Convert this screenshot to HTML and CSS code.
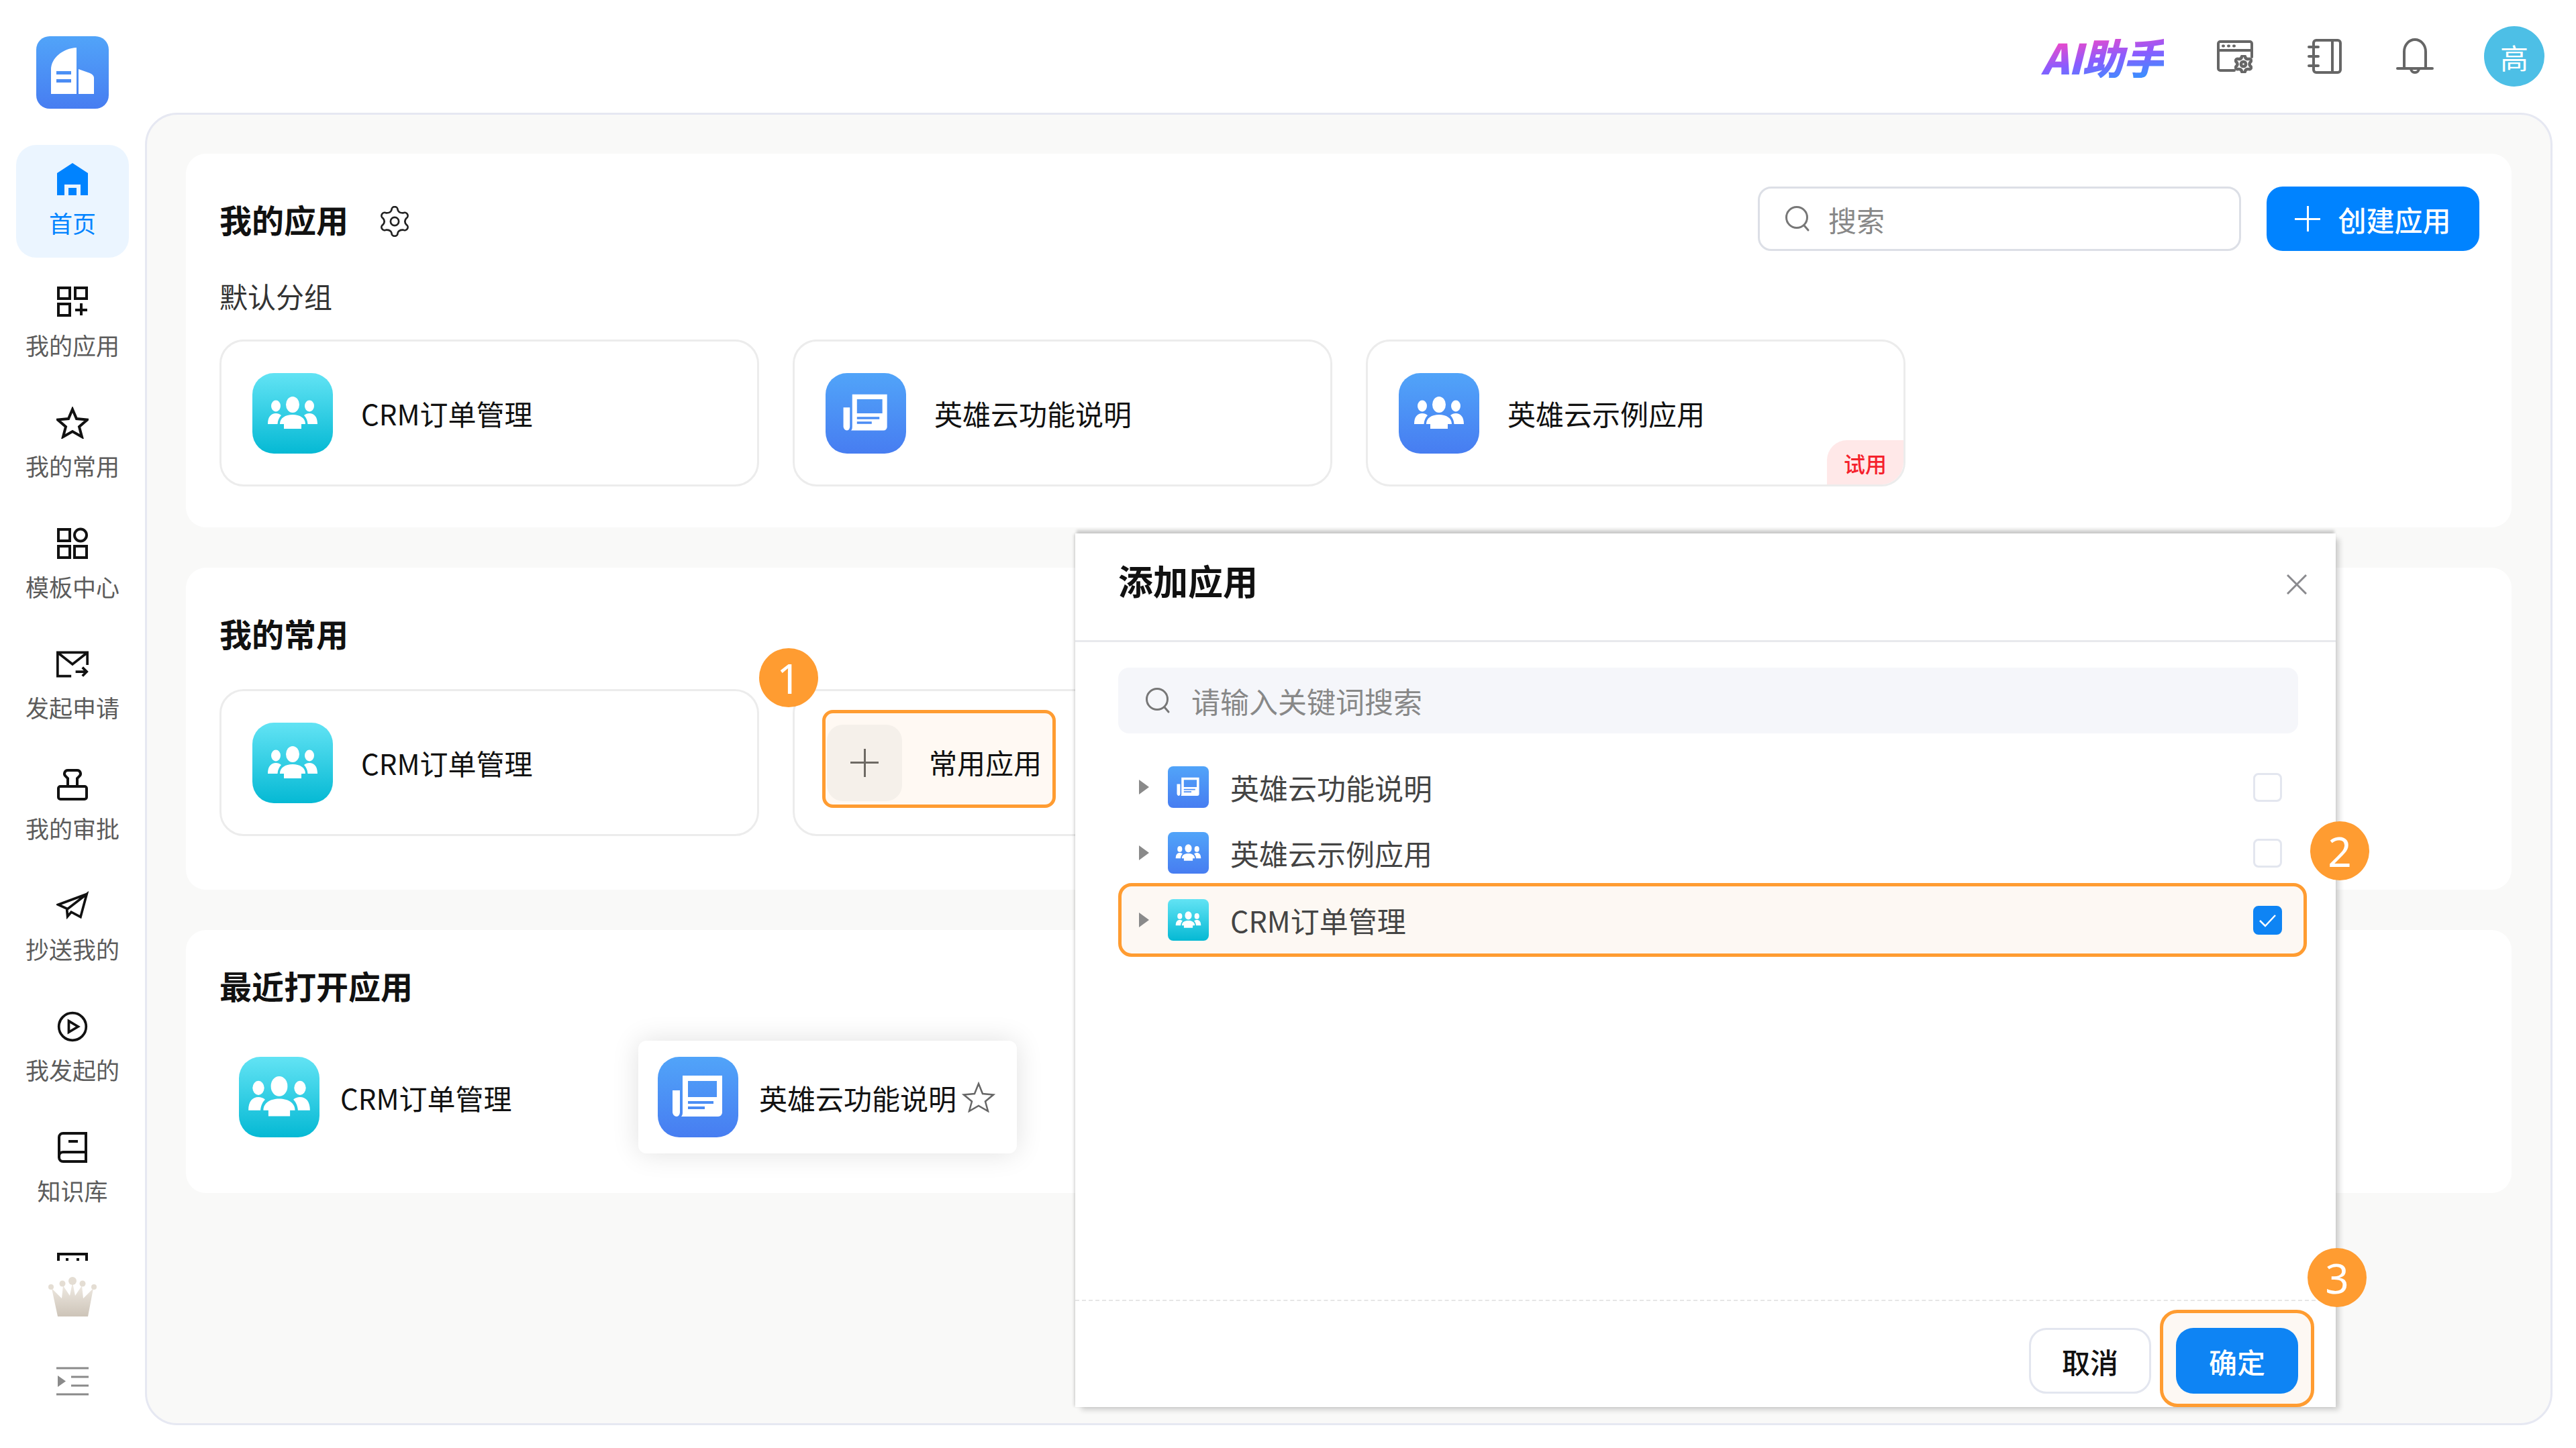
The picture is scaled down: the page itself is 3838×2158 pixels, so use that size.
FILE: index.html
```html
<!DOCTYPE html>
<html lang="zh-CN">

<head>
    <meta charset="UTF-8">
    <title>我的应用</title>
    <link rel="stylesheet" href="styles.css">
</head>

<body>
    <svg class="sprite" xmlns="http://www.w3.org/2000/svg">
        <symbol id="i-people" viewBox="0 0 120 120">
            <ellipse cx="35" cy="49" rx="7" ry="8.5" />
            <ellipse cx="85" cy="49" rx="7" ry="8.5" />
            <ellipse cx="60" cy="47" rx="10" ry="12" />
            <path d="M23 76c0-11 5-16 12-16 3 0 6 1 8 3-3 3-5 7-5.500 13z" />
            <path d="M97 76c0-11-5-16-12-16-3 0-6 1-8 3 3 3 5 7 5.500 13z" />
            <path d="M41 76c0-9 8-14 19-14s19 5 19 14h-6v7H47v-7z" />
        </symbol>
        <symbol id="i-paper" viewBox="0 0 120 120">
            <path fill-rule="evenodd" d="M37 28h59v55a6 6 0 0 1-6 6H35c2-2 2-4 2-8zM45 36v24h43V36zM45 66v4h38v-4zM45 74v4h25v-4z" />
            <path d="M22 50h11v32c0 4-2 7-5 7s-6-3-6-7z" />
        </symbol>
        <symbol id="i-gear" viewBox="0 0 24 24">
            <path d="M9.600 3A2.400 2.400 0 0 1 14.400 3Q15 5.500 18.600 5.420A2.400 2.400 0 0 1 21 9.580Q19 12 21 14.420A2.400 2.400 0 0 1 18.600 18.580Q15 18.500 14.400 21A2.400 2.400 0 0 1 9.600 21Q9 18.500 5.400 18.580A2.400 2.400 0 0 1 3 14.420Q5 12 3 9.580A2.400 2.400 0 0 1 5.400 5.420Q9 5.500 9.600 3Z" />
            <circle cx="12" cy="12" r="3.200" />
        </symbol>
        <symbol id="i-search" viewBox="0 0 40 40">
            <circle cx="19" cy="18" r="15.500" />
            <path d="M30 30l6 7" />
        </symbol>
    </svg>

    <aside class="sidebar">
        <div class="logo">
            <svg viewBox="0 0 108 108" width="108" height="108">
                <path fill="#fff" fill-rule="evenodd" d="M22 86V50C22 32 40 18 60 17v69zM30 52v5h22v-5zM30 64v5h22v-5z" />
                <path fill="#fff" d="M63 49l17 6q6 3 6 7v24H63z" />
            </svg>
        </div>
        <nav class="nav">
            <a class="nav-item active">
                <svg class="nav-icon" viewBox="0 0 48 48">
                    <path class="solid" d="M24 0l23 15v33H1V15z" />
                    <path fill="#ebf5ff" d="M12 32h24v16H12z" />
                    <path class="solid" d="M18 37h12v11H18z" />
                </svg>
                <span>首页</span>
            </a>
            <a class="nav-item">
                <svg class="nav-icon" viewBox="0 0 48 48">
                    <rect x="3" y="3" width="17" height="16" />
                    <rect x="28" y="3" width="17" height="16" />
                    <rect x="3" y="27" width="17" height="17" />
                    <path d="M37 26v18M28 36h18" />
                </svg>
                <span>我的应用</span>
            </a>
            <a class="nav-item">
                <svg class="nav-icon" viewBox="0 0 48 48">
                    <path d="M24 4l6 14 16 1.500-12 10.500 4 15-14-8-14 8 4-15-12-10.500 16-1.500z" />
                </svg>
                <span>我的常用</span>
            </a>
            <a class="nav-item">
                <svg class="nav-icon" viewBox="0 0 48 48">
                    <rect x="3" y="3" width="17" height="17" />
                    <circle cx="36" cy="11.500" r="9" />
                    <rect x="3" y="28" width="17" height="17" />
                    <rect x="27" y="28" width="18" height="17" />
                </svg>
                <span>模板中心</span>
            </a>
            <a class="nav-item">
                <svg class="nav-icon" viewBox="0 0 52 48">
                    <path d="M24 43H2V5h48v20M2 5l24 19L50 5M31 36h18M42 29l7 7-7 7" />
                </svg>
                <span>发起申请</span>
            </a>
            <a class="nav-item">
                <svg class="nav-icon" viewBox="0 0 48 48">
                    <path d="M17 2h14a5 5 0 0 1 3 9l-3 3v12H17V14l-3-3a5 5 0 0 1 3-9z" />
                    <rect x="3" y="26" width="42" height="19" rx="3" />
                </svg>
                <span>我的审批</span>
            </a>
            <a class="nav-item">
                <svg class="nav-icon" viewBox="0 0 52 48">
                    <path d="M49 5L3 22l15 7L49 5 39 42l-15-8-6 7-1-11" />
                </svg>
                <span>抄送我的</span>
            </a>
            <a class="nav-item">
                <svg class="nav-icon" viewBox="0 0 52 48">
                    <circle cx="26" cy="24" r="22" />
                    <path d="M20 15l15 9-15 9z" />
                </svg>
                <span>我发起的</span>
            </a>
            <a class="nav-item">
                <svg class="nav-icon" viewBox="0 0 48 48">
                    <path d="M10 3h34v42H10a6 6 0 0 1-6-6V9a6 6 0 0 1 6-6zM4 37a6 6 0 0 1 6-6h34M18 15h14" />
                </svg>
                <span>知识库</span>
            </a>
            <a class="nav-item">
                <svg class="nav-icon" viewBox="0 0 48 48">
                    <rect x="3" y="3" width="42" height="42" />
                    <path d="M16 9v6M32 9v6" />
                </svg>
            </a>
        </nav>
        <svg class="crown" viewBox="0 0 72 61">
            <defs>
                <linearGradient id="crown-fill" x1="0" y1="0" x2="0" y2="1">
                    <stop offset="0" stop-color="#f1ece5" />
                    <stop offset="1" stop-color="#cdc4b8" />
                </linearGradient>
            </defs>
            <path fill="url(#crown-fill)" d="M5 17l15 15L22 13l10 15 4-20 4 20 10-15 2 19 15-15-8 42H14z" />
            <circle cx="4" cy="15" r="4" fill="#e4ddd3" />
            <circle cx="21" cy="10" r="4.500" fill="#e4ddd3" />
            <circle cx="36" cy="6" r="6" fill="#e4ddd3" />
            <circle cx="51" cy="10" r="4.500" fill="#e4ddd3" />
            <circle cx="68" cy="15" r="4" fill="#e4ddd3" />
        </svg>
        <svg class="collapse" viewBox="0 0 48 43">
            <path d="M0 2h48M22 15h26M22 28h26M0 41h48" stroke="#8a8a8a" stroke-width="3" fill="none" />
            <path d="M2 13l12 8.500L2 30z" fill="#8a8a8a" />
        </svg>
    </aside>

    <div class="content">
        <header class="topbar">
            <span class="ai-label">AI助手</span>
            <svg class="top-icon" viewBox="0 0 56 50">
                <path d="M27 46H6a3 3 0 0 1-3-3V6a3 3 0 0 1 3-3h44a3 3 0 0 1 3 3v20M3 16h50" />
                <path class="dots" d="M10 9.500h1M18 9.500h1M26 9.500h1" />
                <use href="#i-gear" x="27" y="23" width="27" height="27" />
            </svg>
            <svg class="top-icon" viewBox="0 0 56 54">
                <rect x="11" y="3" width="40" height="48" rx="4" />
                <path d="M39 3v48M4 13h14M4 27h14M4 41h14" />
            </svg>
            <svg class="top-icon" viewBox="0 0 56 56">
                <path d="M12 46V21a16 18 0 0 1 32 0v25M2 46h52M22 46a6 6 0 0 0 12 0" />
            </svg>
            <div class="avatar">高</div>
        </header>

        <main class="main">
            <section class="panel panel-apps">
                <div class="panel-head">
                    <h2>我的应用</h2>
                    <svg class="title-gear"><use href="#i-gear" /></svg>
                    <div class="search-box">
                        <svg class="search-icon"><use href="#i-search" /></svg>
                        <span>搜索</span>
                    </div>
                    <button class="create-btn"><span class="plus"></span>创建应用</button>
                </div>
                <div class="group-name">默认分组</div>
                <div class="app-row">
                    <div class="app-card">
                        <div class="app-icon cyan"><svg><use href="#i-people" /></svg></div>
                        <span>CRM订单管理</span>
                    </div>
                    <div class="app-card">
                        <div class="app-icon blue"><svg class="small"><use href="#i-paper" /></svg></div>
                        <span>英雄云功能说明</span>
                    </div>
                    <div class="app-card">
                        <div class="app-icon blue"><svg><use href="#i-people" /></svg></div>
                        <span>英雄云示例应用</span>
                        <span class="trial-tag">试用</span>
                    </div>
                </div>
            </section>

            <section class="panel panel-common">
                <h2>我的常用</h2>
                <div class="app-row">
                    <div class="app-card">
                        <div class="app-icon cyan"><svg><use href="#i-people" /></svg></div>
                        <span>CRM订单管理</span>
                    </div>
                    <div class="app-card add-card">
                        <div class="add-app">
                            <div class="add-tile"><span class="plus"></span></div>
                            <span>常用应用</span>
                        </div>
                    </div>
                </div>
            </section>

            <section class="panel panel-recent">
                <h2>最近打开应用</h2>
                <div class="recent-row">
                    <div class="recent-item">
                        <div class="app-icon cyan"><svg class="large"><use href="#i-people" /></svg></div>
                        <span>CRM订单管理</span>
                    </div>
                    <div class="recent-item hovered">
                        <div class="app-icon blue"><svg><use href="#i-paper" /></svg></div>
                        <span>英雄云功能说明</span>
                        <svg class="fav-star" viewBox="0 0 50 46">
                            <path d="M25 3l6 15 16 1.500-12 10 4 14.500-14-8-14 8 4-14.500-12-10L19 18z" />
                        </svg>
                    </div>
                </div>
            </section>

            <div class="dialog">
                <div class="dialog-head">
                    <h3>添加应用</h3>
                    <svg class="close-icon" viewBox="0 0 30 30">
                        <path d="M1 1l28 28M29 1L1 29" />
                    </svg>
                </div>
                <div class="dialog-search">
                    <svg class="search-icon"><use href="#i-search" /></svg>
                    <span>请输入关键词搜索</span>
                </div>
                <div class="tree">
                    <div class="tree-row">
                        <span class="caret"></span>
                        <div class="tree-icon blue"><svg class="small"><use href="#i-paper" /></svg></div>
                        <span class="tree-name">英雄云功能说明</span>
                        <span class="check"></span>
                    </div>
                    <div class="tree-row">
                        <span class="caret"></span>
                        <div class="tree-icon blue"><svg><use href="#i-people" /></svg></div>
                        <span class="tree-name">英雄云示例应用</span>
                        <span class="check"></span>
                    </div>
                    <div class="tree-row selected">
                        <span class="caret"></span>
                        <div class="tree-icon cyan"><svg><use href="#i-people" /></svg></div>
                        <span class="tree-name">CRM订单管理</span>
                        <span class="check checked">
                            <svg viewBox="0 0 43 43"><path d="M10 22l8 8 15-16" /></svg>
                        </span>
                    </div>
                </div>
                <div class="dialog-foot">
                    <button class="cancel-btn">取消</button>
                    <div class="confirm-wrap">
                        <button class="confirm-btn">确定</button>
                    </div>
                </div>
            </div>

            <span class="step step-1">1</span>
            <span class="step step-2">2</span>
            <span class="step step-3">3</span>
        </main>
    </div>
</body>

</html>
```

FILE: styles.css
```css
* {
    box-sizing: border-box;
}

html,
body {
    margin: 0;
    height: 100%;
}

body {
    display: flex;
    height: 2158px;
    overflow: hidden;
    background-color: #fff;
    font-family: "Noto Sans CJK SC", "Noto Sans", sans-serif;
    color: #111;
}

h2,
h3 {
    margin: 0;
    font-weight: 700;
}

button {
    font-family: inherit;
    border: none;
    padding: 0;
}

.sprite {
    position: absolute;
    width: 0;
    height: 0;
}

/* sidebar */
.sidebar {
    width: 216px;
    flex-shrink: 0;
    display: flex;
    flex-direction: column;
    align-items: center;
    padding-top: 54px;
}

.logo {
    width: 108px;
    height: 108px;
    flex-shrink: 0;
    border-radius: 20px;
    background: linear-gradient(180deg, #51a4f9, #477df1);
    margin-bottom: 54px;
}

.logo svg {
    display: block;
}

.nav {
    width: 168px;
    height: 1663px;
    flex-shrink: 0;
    display: flex;
    flex-direction: column;
    gap: 12px;
    overflow: hidden;
}

.nav-item {
    height: 168px;
    flex-shrink: 0;
    display: flex;
    flex-direction: column;
    align-items: center;
    padding-top: 30px;
    border-radius: 30px;
    font-size: 35px;
    line-height: 44px;
    color: #5c5c5c;
    white-space: nowrap;
}

.nav-item span {
    margin-top: 18px;
}

.nav-item.active {
    padding-top: 27px;
    background-color: #ebf5ff;
    color: #0083ff;
}

.nav-item.active span {
    margin-top: 19px;
}

.nav-icon {
    width: 48px;
    height: 48px;
    flex-shrink: 0;
    fill: none;
    stroke: #111;
    stroke-width: 4;
}

.nav-icon .solid {
    fill: #0083ff;
    stroke: none;
}

.active .nav-icon {
    stroke: none;
}

.crown {
    width: 72px;
    height: 61px;
    margin-top: 24px;
    flex-shrink: 0;
}

.collapse {
    width: 48px;
    height: 43px;
    margin-top: 73px;
    flex-shrink: 0;
}

/* top bar */
.content {
    width: 3587px;
    display: flex;
    flex-direction: column;
}

.topbar {
    height: 168px;
    flex-shrink: 0;
    display: flex;
    align-items: center;
    justify-content: flex-end;
    gap: 78px;
    margin-right: -35px;
    padding-right: 47px;
}

.ai-label {
    font-size: 62px;
    line-height: 64px;
    font-weight: 900;
    font-style: italic;
    letter-spacing: -1px;
    color: transparent;
    background: linear-gradient(170deg, #ff45c0 10%, #8a5cff 55%, #3f8cff 90%);
    -webkit-background-clip: text;
    background-clip: text;
}

.top-icon {
    width: 56px;
    height: 56px;
    fill: none;
    stroke: #666;
    stroke-width: 4;
    stroke-linecap: round;
    overflow: visible;
}

.top-icon .dots {
    stroke-width: 4;
}

.avatar {
    width: 90px;
    height: 90px;
    margin-left: -3px;
    border-radius: 50%;
    background-color: #4dbfe6;
    color: #fff;
    font-size: 42px;
    display: flex;
    align-items: center;
    justify-content: center;
}

/* main area */
.main {
    position: relative;
    height: 1956px;
    display: flex;
    flex-direction: column;
    gap: 60px;
    padding: 61px 58px 0;
    background-color: #f9f9f8;
    border: 3px solid #e6e8f2;
    border-radius: 48px;
}

.panel {
    background-color: #fff;
    border-radius: 30px;
    padding: 0 50px;
    overflow: hidden;
    flex-shrink: 0;
}

.panel h2 {
    font-size: 48px;
    line-height: 58px;
}

.panel-apps {
    margin-top: -3px;
    height: 557px;
    padding-top: 49px;
}

.panel-common {
    height: 480px;
    padding-top: 68px;
}

.panel-recent {
    height: 392px;
    padding-top: 53px;
}

.panel-head {
    display: flex;
    align-items: center;
    height: 96px;
}

.title-gear {
    width: 46px;
    height: 46px;
    margin-left: 46px;
    margin-top: 8px;
    fill: none;
    stroke: #222;
    stroke-width: 1.400;
}

.search-box {
    width: 720px;
    height: 96px;
    margin-left: auto;
    display: flex;
    align-items: center;
    gap: 26px;
    padding-left: 36px;
    border: 3px solid #dcdfe6;
    border-radius: 20px;
    font-size: 42px;
    color: #888;
}

.search-icon {
    width: 40px;
    height: 40px;
    fill: none;
    stroke: #777;
    stroke-width: 3;
    stroke-linecap: round;
}

.create-btn {
    width: 317px;
    height: 96px;
    margin-left: 38px;
    margin-right: -2px;
    display: flex;
    align-items: center;
    justify-content: center;
    gap: 26px;
    background-color: #0083ff;
    color: #fff;
    border-radius: 24px;
    font-size: 42px;
    font-weight: 500;
}

.plus {
    position: relative;
    width: 38px;
    height: 38px;
    flex-shrink: 0;
    background:
        linear-gradient(currentColor, currentColor) center / 100% 3px no-repeat,
        linear-gradient(currentColor, currentColor) center / 3px 100% no-repeat;
}

.group-name {
    margin-top: 37px;
    font-size: 42px;
    line-height: 60px;
    color: #333;
}

.app-row {
    display: flex;
    gap: 50px;
    margin-top: 55px;
}

.group-name + .app-row {
    margin-top: 35px;
}

.app-card {
    position: relative;
    width: 804px;
    height: 219px;
    flex-shrink: 0;
    display: flex;
    align-items: center;
    gap: 42px;
    padding-left: 46px;
    border: 3px solid #ececec;
    border-radius: 36px;
    font-size: 42px;
    overflow: hidden;
}

.app-icon {
    width: 120px;
    height: 120px;
    flex-shrink: 0;
    border-radius: 32px;
}

.app-icon svg,
.tree-icon svg {
    display: block;
    width: 100%;
    height: 100%;
    fill: #fff;
}

.app-icon svg.small,
.tree-icon svg.small {
    transform: scale(0.88);
}

.app-icon svg.large {
    transform: scale(1.24);
}

.cyan {
    background: linear-gradient(180deg, #62e3f4, #05b9d4);
}

.blue {
    background: linear-gradient(180deg, #51a4f9, #477df1);
}

.trial-tag {
    position: absolute;
    right: 0;
    bottom: 0;
    width: 114px;
    height: 66px;
    padding-top: 12px;
    text-align: center;
    background-color: #ffe8e8;
    border-top-left-radius: 30px;
    color: #f5222d;
    font-size: 32px;
    line-height: 44px;
    font-weight: 500;
}

.add-card {
    padding: 0 0 12px 41px;
}

.add-app {
    width: 348px;
    height: 146px;
    flex-shrink: 0;
    display: flex;
    align-items: center;
    gap: 40px;
    padding-left: 2px;
    background-color: #fff9f3;
    border: 5px solid #ff9c31;
    border-radius: 16px;
    white-space: nowrap;
}

.add-tile {
    width: 112px;
    height: 114px;
    margin-top: 12px;
    flex-shrink: 0;
    display: flex;
    align-items: center;
    justify-content: center;
    background-color: #f5f0ea;
    border-radius: 24px;
    color: #6e6a64;
}

.add-tile .plus {
    width: 42px;
    height: 42px;
}

.add-app > span {
    margin-top: 10px;
}

.recent-row {
    display: flex;
    gap: 60px;
    margin-top: 54px;
}

.recent-item {
    width: 564px;
    height: 168px;
    flex-shrink: 0;
    display: flex;
    align-items: center;
    gap: 31px;
    padding-left: 29px;
    font-size: 42px;
    border-radius: 12px;
    white-space: nowrap;
}

.recent-item.hovered {
    box-shadow: 0 0 40px rgba(0, 0, 0, 0.12);
}

.fav-star {
    width: 50px;
    height: 46px;
    margin-left: -23px;
    flex-shrink: 0;
    fill: none;
    stroke: #666;
    stroke-width: 2.500;
}

/* dialog */
.dialog {
    position: absolute;
    left: 1383px;
    top: 624px;
    width: 1878px;
    height: 1302px;
    display: flex;
    flex-direction: column;
    background-color: #fff;
    box-shadow:
        0 -7px 4px -2px rgba(0, 0, 0, 0.17),
        7px 6px 8px -2px rgba(0, 0, 0, 0.18),
        -3px 0 4px -1px rgba(0, 0, 0, 0.14);
}

.dialog-head {
    height: 162px;
    flex-shrink: 0;
    display: flex;
    align-items: center;
    justify-content: space-between;
    padding: 0 43px 0 64px;
    border-bottom: 3px solid #e8e9ed;
}

.dialog-head h3 {
    font-size: 52px;
    line-height: 60px;
    margin-bottom: 20px;
}

.close-icon {
    width: 30px;
    height: 30px;
    margin-bottom: 8px;
    fill: none;
    stroke: #8a8a8e;
    stroke-width: 3;
}

.dialog-search {
    height: 98px;
    flex-shrink: 0;
    margin: 38px 56px 0 64px;
    display: flex;
    align-items: center;
    gap: 30px;
    padding-left: 39px;
    background-color: #f5f6fa;
    border-radius: 16px;
    font-size: 43px;
    color: #888;
}

.tree {
    margin: 31px 43px 0 64px;
}

.tree-row {
    height: 98px;
    display: flex;
    align-items: center;
    padding: 0 32px 0 26px;
    border: 5px solid transparent;
    border-radius: 20px;
    font-size: 43px;
    color: #444;
}

.tree-row.selected {
    height: 110px;
    margin-top: -4px;
    background-color: #fdf8f3;
    border-color: #ff9c31;
}

.caret {
    width: 0;
    height: 0;
    flex-shrink: 0;
    border-left: 15px solid #8a8a8a;
    border-top: 11px solid transparent;
    border-bottom: 11px solid transparent;
}

.tree-icon {
    width: 61px;
    height: 62px;
    flex-shrink: 0;
    margin-left: 28px;
    border-radius: 8px;
}

.tree-name {
    margin-left: 32px;
}

.check {
    width: 43px;
    height: 43px;
    margin-left: auto;
    flex-shrink: 0;
    background-color: #fff;
    border: 3px solid #e3e6ef;
    border-radius: 8px;
}

.check.checked {
    background-color: #0e84f4;
    border-color: #0e84f4;
}

.check svg {
    display: block;
    width: 43px;
    height: 43px;
    margin: -3px;
    fill: none;
    stroke: #fff;
    stroke-width: 2.500;
}

.dialog-foot {
    height: 160px;
    margin-top: auto;
    display: flex;
    align-items: flex-end;
    justify-content: flex-end;
    gap: 13px;
    padding-right: 32px;
    border-top: 2px dashed #e6e6e6;
}

.cancel-btn,
.confirm-btn {
    width: 182px;
    height: 98px;
    border-radius: 26px;
    font-size: 42px;
    font-weight: 500;
}

.cancel-btn {
    margin-bottom: 20px;
    background-color: #fff;
    border: 3px solid #e3e6ef;
    color: #111;
}

.confirm-btn {
    display: block;
    background-color: #0e84f4;
    color: #fff;
}

.confirm-wrap {
    padding: 22px 19px 15px;
    background-color: #fdf8f3;
    border: 5px solid #ff9c31;
    border-radius: 26px;
}

/* numbered step markers */
.step {
    position: absolute;
    width: 88px;
    height: 88px;
    display: flex;
    align-items: center;
    justify-content: center;
    border-radius: 50%;
    background-color: #ff9c31;
    color: #fff;
    font-family: "Noto Sans", sans-serif;
    font-size: 62px;
}

.step-1 {
    left: 912px;
    top: 795px;
}

.step-2 {
    left: 3223px;
    top: 1053px;
}

.step-3 {
    left: 3219px;
    top: 1689px;
}
```
